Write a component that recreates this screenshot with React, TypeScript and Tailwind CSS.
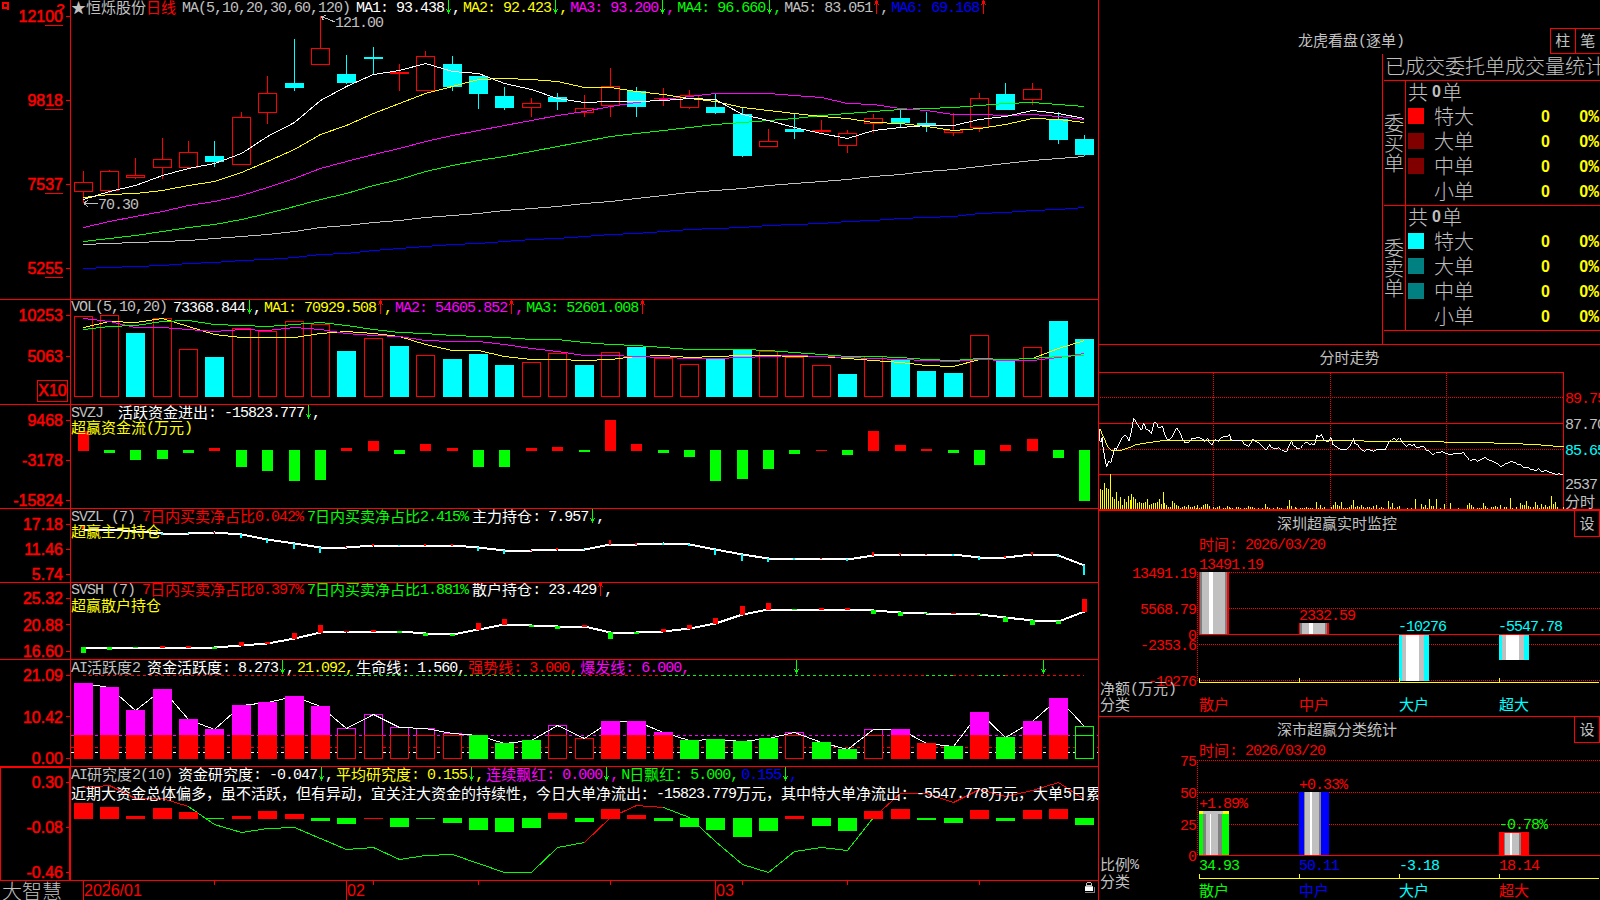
import React from 'react';

type Tone = 'r' | 'g' | 'c' | 'y' | 'w' | 's' | 'm' | 'b';

const text: Record<Tone, string> = {
  r: 'text-[#ff0000]',
  g: 'text-[#00ff00]',
  c: 'text-[#00ffff]',
  y: 'text-[#ffff00]',
  w: 'text-white',
  s: 'text-[#c0c0c0]',
  m: 'text-[#ff00ff]',
  b: 'text-[#0000ff]',
};

const RED = '#ff0000';
const GREEN = '#00ff00';
const CYAN = '#00ffff';
const YELLOW = '#ffff00';
const MAGENTA = '#ff00ff';
const SILVER = '#c0c0c0';
const BLUE = '#0000ff';

// 39 trading days, evenly spaced
const cx = (i: number) => Math.floor(83.2 + 26.358 * i);

// [rising, bodyTop, bodyBottom, high, low]
const candles: [number, number, number, number, number][] = [
  [1, 182, 191, 171, 203], [1, 171, 190, 170, 193], [1, 175, 177, 158, 179], [1, 159, 167, 138, 179],
  [1, 152, 167, 141, 167], [0, 156, 162, 141, 167], [1, 117, 164, 112, 164], [1, 93, 112, 76, 124],
  [0, 83, 88, 39, 91], [1, 48, 64, 16, 64], [0, 74, 83, 55, 84], [0, 57, 59, 47, 74],
  [1, 72, 73, 64, 91], [1, 56, 90, 51, 90], [0, 64, 87, 56, 91], [0, 76, 94, 76, 109],
  [0, 96, 108, 87, 110], [1, 103, 107, 98, 117], [0, 97, 102, 93, 110], [1, 108, 112, 95, 117],
  [1, 86, 105, 68, 117], [0, 91, 107, 87, 117], [1, 98, 98, 88, 106], [1, 95, 107, 90, 109],
  [0, 107, 113, 94, 114], [0, 114, 156, 107, 157], [1, 141, 146, 129, 146], [0, 129, 132, 113, 139],
  [1, 130, 131, 120, 134], [1, 133, 145, 130, 153], [1, 118, 123, 114, 133], [0, 118, 123, 109, 127],
  [0, 123, 125, 112, 132], [1, 130, 132, 113, 136], [1, 98, 127, 93, 132], [0, 94, 110, 83, 110],
  [1, 89, 99, 83, 105], [0, 119, 140, 112, 144], [0, 139, 155, 135, 156],
];

const ma: [string, number[]][] = [
  [BLUE, [268, 267, 266, 265, 263, 262, 260, 259, 257, 254, 253, 250, 248, 246, 244, 243, 241, 239, 238, 236, 234, 233, 231, 229, 228, 227, 225, 224, 223, 221, 220, 218, 217, 216, 213, 212, 210, 209, 207]],
  [SILVER, [244, 243, 242, 241, 240, 238, 236, 234, 231, 227, 225, 222, 220, 217, 215, 213, 210, 208, 206, 203, 201, 198, 195, 192, 190, 188, 185, 183, 181, 179, 176, 174, 171, 169, 166, 163, 160, 158, 156]],
  [GREEN, [241, 238, 235, 231, 227, 224, 219, 213, 206, 199, 193, 185, 179, 171, 165, 160, 156, 151, 146, 141, 136, 133, 130, 127, 124, 122, 120, 118, 115, 113, 111, 109, 108, 107, 105, 103, 102, 104, 106]],
  [MAGENTA, [227, 221, 216, 211, 205, 201, 195, 187, 178, 168, 161, 154, 148, 141, 135, 130, 125, 120, 115, 111, 106, 102, 99, 96, 93, 93, 93, 95, 97, 103, 104, 108, 110, 114, 114, 115, 114, 116, 119]],
  [YELLOW, [197, 194, 193, 190, 185, 181, 172, 161, 149, 134, 125, 113, 103, 93, 86, 79, 78, 79, 81, 87, 87, 91, 94, 98, 101, 107, 110, 113, 116, 118, 122, 123, 126, 130, 128, 124, 118, 119, 122]],
  ['#ffffff', [199, 191, 185, 175, 168, 163, 153, 136, 122, 100, 86, 74, 70, 63, 71, 73, 83, 89, 98, 102, 101, 101, 100, 98, 99, 114, 120, 127, 133, 138, 130, 127, 125, 125, 119, 116, 110, 113, 118]],
];

const volTop = [316, 315, 333, 318, 349, 357, 328, 331, 321, 324, 351, 338, 346, 355, 359, 354, 365, 362, 353, 365, 352, 347, 358, 364, 359, 349, 351, 357, 365, 374, 356, 359, 371, 373, 335, 360, 347, 321, 339];
// R = hollow red, C = solid cyan
const volKind = 'RRCRRCRRRRCRCRCCCRRCRCRRCCRRRCRCCCRCRCC';
const volMa: [string, number[]][] = [
  [YELLOW, [327, 321, 322, 318, 326, 334, 337, 337, 337, 333, 331, 333, 336, 344, 350, 350, 356, 359, 359, 360, 359, 356, 355, 357, 356, 355, 355, 356, 356, 358, 360, 362, 365, 366, 359, 359, 358, 348, 340]],
  [MAGENTA, [318, 321, 327, 327, 329, 331, 329, 330, 327, 329, 333, 335, 336, 340, 341, 341, 344, 348, 351, 355, 355, 356, 357, 358, 358, 357, 356, 355, 356, 357, 358, 359, 360, 361, 359, 360, 360, 357, 353]],
  [GREEN, [329, 326, 325, 321, 320, 324, 325, 326, 324, 322, 325, 329, 332, 333, 335, 336, 337, 339, 339, 342, 344, 345, 347, 349, 349, 349, 350, 352, 354, 356, 356, 357, 359, 360, 358, 359, 358, 356, 355]],
];

const flow = [20, -3, -10, -9, -3, 3, -17, -21, -31, -30, 3, 10, -4, 7, 3, -17, -17, 3, 4, -2, 31, 7, -3, -7, -31, -29, -19, -4, 1, -5, 20, 6, 2, -3, -15, 6, 12, -8, -51];

const mainHold = [529, 529, 531, 533, 533, 532, 534, 539, 543, 547, 547, 545, 545, 545, 545, 547, 550, 550, 549, 549, 544, 544, 543, 544, 549, 554, 558, 558, 558, 559, 555, 554, 554, 554, 557, 557, 554, 555, 565];
const mainTick = [5, -2, -2, -2, -1, 1, -4, -4, -6, -6, 1, 2, -1, 2, 2, -4, -4, 1, 2, -1, 5, 2, -2, -2, -6, -7, -4, -2, 1, -2, 4, 2, 1, -2, -3, 2, 3, -2, -10];

const retailHold = [647, 647, 647, 647, 647, 647, 645, 643, 638, 632, 631, 631, 631, 633, 634, 629, 624, 625, 626, 626, 632, 632, 631, 628, 623, 614, 609, 609, 609, 609, 610, 612, 613, 613, 614, 617, 620, 621, 611];
const retailTick = [-6, -3, -1, 2, 2, -2, 4, 2, 6, 8, 1, 2, -2, -3, -2, 7, 6, -2, -3, 2, -7, -2, 3, 4, 6, 9, 7, -1, 2, 2, -4, -4, -1, 1, -1, -5, -5, -3, 13];

const activeTop = [683, 687, 710, 689, 719, 729, 705, 702, 696, 706, 728, 714, 727, 728, 733, 735, 743, 740, 725, 738, 721, 721, 732, 740, 739, 741, 738, 732, 742, 749, 729, 729, 743, 746, 712, 737, 721, 698, 726];
// F = solid, H = hollow, G = solid green, E = hollow green
const activeKind = 'FFFFFFFFFFHHHHHGGGHHFFFGGGGHGGHFFGFGFFE';
const activeDash: [string, number, number][] = [
  [RED, 83, 320], [GREEN, 320, 583], [RED, 583, 663], [GREEN, 663, 873], [RED, 873, 926],
  [GREEN, 926, 953], [RED, 953, 979], [GREEN, 979, 1005], [RED, 1005, 1084],
];

const research = [16, 12, 3, 11, 7, -1, 3, 8, 5, -3, -6, 1, -9, -1, -5, -12, -14, -10, 6, -4, 10, 4, -3, -9, -12, -19, -13, 3, -8, -13, 8, 10, -2, -5, 9, -3, 9, 10, -7];
const researchLine = [787, 785, 798, 798, 806, 824, 832, 828, 827, 838, 849, 847, 859, 855, 854, 863, 872, 872, 847, 842, 817, 805, 807, 817, 841, 864, 872, 851, 847, 850, 817, 793, 793, 802, 789, 796, 790, 782, 799];
const researchParts: [string, number, number][] = [[RED, 0, 4], [GREEN, 4, 19], [RED, 19, 22], [GREEN, 22, 30], [RED, 30, 38]];

// one-minute price and average line, in thirds of a pixel
const price = '10,265 10,300 14,305 18,290 20,320 26,355 31,380 37,362 43,368 50,345 56,322 60,328 68,310 76,295 86,283 92,290 98,303 105,275 112,233 120,247 128,260 136,270 142,247 150,268 158,270 165,280 174,245 180,247 186,262 192,262 198,256 206,285 212,296 220,297 228,290 233,277 242,263 250,275 256,290 264,305 272,307 277,308 288,293 296,296 303,290 320,297 324,304 334,293 338,304 346,315 352,303 358,297 366,304 374,292 384,288 396,288 400,281 404,298 412,300 436,300 444,312 458,318 464,307 470,296 476,303 488,307 496,318 510,328 516,320 520,312 526,322 540,325 548,322 556,330 572,334 578,316 582,310 586,303 592,318 598,318 602,326 612,324 622,313 632,304 640,313 646,310 650,315 656,310 662,284 666,290 676,283 682,298 690,303 698,303 703,290 710,313 718,318 732,327 750,328 760,318 768,305 772,293 776,310 784,312 792,325 804,333 812,326 832,333 840,328 866,328 874,313 878,306 886,298 894,295 902,300 910,292 918,307 930,318 940,312 948,318 952,310 960,322 982,318 990,330 1000,333 1010,345 1018,337 1030,337 1036,333 1050,340 1064,343 1072,340 1094,340 1100,336 1108,345 1120,360 1138,358 1144,363 1152,358 1166,352 1176,358 1190,363 1206,371 1214,381 1224,372 1244,364 1256,366 1266,374 1274,374 1282,382 1296,382 1304,388 1320,390 1326,385 1336,394 1350,390 1360,396 1374,400 1382,404 1388,398 1392,403 1400,403';
const average = '10,265 22,290 34,318 44,330 74,330 104,320 120,313 150,308 200,301 400,301 800,301 806,304 1040,304 1050,307 1190,307 1200,310 1275,310 1285,313 1335,314 1345,317 1370,317 1402,320';

const minuteVol = '13:20 19:19 25:26 31:21 37:20 43:35 49:12 55:10 61:17 67:8 73:12 79:4 85:10 91:7 97:13 103:9 106:15 112:12 118:10 124:6 130:7 136:6 142:6 148:7 154:10 160:4 166:5 172:6 178:6 184:7 190:10 196:5 202:17 205:6 211:4 217:2 223:2 229:8 235:6 241:4 247:3 253:1 259:2 265:3 271:2 277:4 283:2 289:2 295:3 301:1 304:4 310:1 316:2 322:4 328:5 334:5 340:3 352:2 358:1 364:2 370:3 382:1 388:1 394:3 400:2 403:1 409:1 421:2 427:2 433:1 445:1 451:1 457:3 463:2 469:2 475:1 487:1 499:1 508:5 514:2 520:1 532:1 544:2 550:1 556:1 574:3 580:9 586:3 598:2 601:1 613:1 619:1 625:1 631:2 637:1 643:1 649:1 661:7 667:1 673:4 679:1 685:2 706:2 712:4 718:7 724:4 730:3 736:7 742:1 748:1 754:1 760:2 766:4 772:9 778:2 784:3 790:2 796:4 802:2 808:1 814:2 820:2 826:1 832:3 841:4 850:1 856:2 862:1 877:8 883:2 889:6 895:1 904:2 910:3 934:1 946:1 958:10 976:5 982:2 988:4 994:1 1000:10 1006:3 1012:3 1021:10 1033:1 1045:5 1063:6 1087:1 1114:4 1120:6 1126:4 1132:2 1144:1 1150:1 1156:1 1162:6 1168:3 1174:1 1186:2 1192:2 1198:3 1204:2 1213:4 1225:2 1231:2 1243:11 1249:1 1261:2 1273:6 1279:4 1285:4 1291:8 1297:3 1303:2 1312:2 1318:7 1324:4 1330:1 1336:5 1342:2 1348:4 1354:2 1360:3 1366:13 1372:5 1378:7 1384:2 1402:2'
  .split(' ')
  .map((p) => p.split(':').map(Number));

/* Mixed text: 8px latin cells, 15px hanzi cells, both with the baseline 13px down */
const T: React.FC<{ t: Tone; children: string }> = ({ t, children }) => (
  <span className={`flex h-4 w-max items-start whitespace-pre ${text[t]}`}>
    {children.split(/([\u2605\u3000-\u9fff\uff00-\uffef]+)/).map((s, i) =>
      s === '' ? null : i % 2 ? (
        <span key={i} className="font-['Noto_Sans_CJK_SC',sans-serif] text-[15px] leading-[13px]">{s}</span>
      ) : (
        <span key={i} className="font-['Liberation_Mono',monospace] text-[15px] leading-[18px] tracking-[-1px]">{s}</span>
      ),
    )}
  </span>
);

const Arrow: React.FC<{ up?: boolean }> = ({ up }) => (
  <svg className="h-[15px] w-2 shrink-0" viewBox="0 0 8 15" shapeRendering="crispEdges">
    {up ? (
      <path d="M4 0h1v14h-1zM3 1h3v2h-3zM2 4h1v1h-1zM6 4h1v1h-1zM3 3h3v1h-3z" fill={RED} />
    ) : (
      <path d="M4 0h1v14h-1zM3 10h3v2h-3zM2 9h1v1h-1zM6 9h1v1h-1z" fill={GREEN} />
    )}
  </svg>
);

const Item: React.FC<{ t: Tone; arrow?: 'up' | 'down'; end?: string; children: string }> = ({ t, arrow, end = ',', children }) => (
  <span className="flex">
    <T t={t}>{children}</T>
    {arrow && <Arrow up={arrow === 'up'} />}
    {end && <T t={t}>{end}</T>}
  </span>
);

const line = (ys: number[], from = 0, to = ys.length - 1) =>
  ys.slice(from, to + 1).map((y, i) => `${cx(i + from) + 0.5},${y + 0.5}`).join(' ');

const axis = "font-['Liberation_Sans',sans-serif] text-[16px] [-webkit-text-stroke:0.5px_#ff0000]";

interface PanelProps {
  box: string;
  view: string;
  labels: React.ReactNode[];
  gap: string;
  chart: React.ReactNode;
  children?: React.ReactNode;
  extra?: React.ReactNode;
  frame?: string;
}

const Panel: React.FC<PanelProps> = ({ box, view, labels, gap, chart, children, extra, frame = '' }) => (
  <div className={`flex shrink-0 border-b border-[#ff0000] ${box}`}>
    <div className={`flex w-[71px] shrink-0 flex-col border-r border-[#ff0000] ${gap} ${frame}`}>
      {labels.map((l, i) => (
        <div key={i} className={`flex h-4 shrink-0 items-center justify-end gap-[3px] leading-4 text-[#ff0000] ${axis}`}>
          <span className="pt-0.5">{l}</span>
          <span className="h-px w-1 bg-[#ff0000]" />
        </div>
      ))}
      {extra}
    </div>
    <div className="relative min-w-0 flex-1 overflow-hidden leading-4">
      <svg className="absolute inset-0 h-full w-full" viewBox={view} preserveAspectRatio="xMinYMin slice" shapeRendering="crispEdges">
        {chart}
      </svg>
      <div className="relative">{children}</div>
    </div>
  </div>
);

const priceLabel = (s: string) => (
  <>
    {s.slice(0, -2)}
    <span className="relative">
      {s.slice(-2)}
      <span className="absolute right-0 -bottom-[1px] h-px w-full bg-[#ff0000]" />
    </span>
  </>
);

const note = "font-['Liberation_Mono',monospace] text-[15px] tracking-[-1px]";

const LeftSide: React.FC = () => (
  <div className="flex w-[1099px] shrink-0 flex-col border-r border-[#ff0000]">
    <Panel
      box="h-[300px]"
      view="71 0 1027 299"
      gap="pt-[8px] gap-[68px]"
      labels={['12100', '9818', '7537', '5255'].map(priceLabel)}
      chart={
        <>
          {candles.map(([up, t, b, h, l], i) => {
            const x = cx(i);
            return up ? (
              <g key={i} fill={RED}>
                <rect x={x} y={h} width={1} height={t - h} />
                <rect x={x} y={b} width={1} height={l - b} />
                {b - t < 2 ? (
                  <rect x={x - 9} y={t} width={19} height={b - t + 1} />
                ) : (
                  <rect x={x - 8.5} y={t + 0.5} width={18} height={b - t} fill="none" stroke={RED} />
                )}
              </g>
            ) : (
              <g key={i} fill={CYAN}>
                <rect x={x} y={h} width={1} height={l - h} />
                <rect x={x - 9} y={t} width={19} height={b - t} />
              </g>
            );
          })}
          {ma.map(([c, ys]) => <polyline key={c} points={line(ys)} fill="none" stroke={c} />)}
          <path d="M321.5 16.5L335 22M321.5 16.5l5 -1M321.5 16.5l2 4M84 203.5h14M84 203.5l4 -3.5M84 203.5l4 3.5" stroke={SILVER} fill="none" />
          <text x={335} y={27} className={note} fill={SILVER}>121.00</text>
          <text x={98} y={209} className={note} fill={SILVER}>70.30</text>
        </>
      }
    >
      <div className="flex">
        <T t="s">★恒烁股份</T>
        <T t="r">日线</T>
        <span className="mr-1.5 ml-1.5"><T t="s">MA(5,10,20,30,60,120)</T></span>
        <div className="flex gap-[3px]">
          <Item t="w" arrow="down">MA1: 93.438</Item>
          <Item t="y" arrow="down">MA2: 92.423</Item>
          <Item t="m" arrow="down">MA3: 93.200</Item>
          <Item t="g" arrow="down">MA4: 96.660</Item>
          <Item t="s" arrow="up">MA5: 83.051</Item>
          <Item t="b" arrow="up" end="">MA6: 69.168</Item>
        </div>
      </div>
    </Panel>

    <Panel
      box="h-[105px]"
      view="71 300 1027 104"
      gap="pt-[7px] gap-[25px]"
      labels={['10253', '5063']}
      extra={
        <div className={`-mt-[9px] ml-[37px] flex h-[22px] w-[31px] shrink-0 items-center justify-center border border-[#ff0000] leading-4 text-[#ff0000] ${axis}`}>
          X10
        </div>
      }
      chart={
        <>
          {volTop.map((t, i) =>
            volKind[i] === 'R' ? (
              <rect key={i} x={cx(i) - 8.5} y={t + 0.5} width={18} height={396 - t} fill="none" stroke={RED} />
            ) : (
              <rect key={i} x={cx(i) - 9} y={t} width={19} height={397 - t} fill={CYAN} />
            ),
          )}
          {volMa.map(([c, ys]) => <polyline key={c} points={line(ys)} fill="none" stroke={c} />)}
        </>
      }
    >
      <div className="flex gap-[3px]">
        <span className="mr-[3px] -mt-px"><T t="s">VOL(5,10,20)</T></span>
        <Item t="w" arrow="down">73368.844</Item>
        <Item t="y" arrow="up">MA1: 70929.508</Item>
        <Item t="m" arrow="up">MA2: 54605.852</Item>
        <Item t="g" arrow="up" end="">MA3: 52601.008</Item>
      </div>
    </Panel>

    <Panel
      box="h-[104px]"
      view="71 405 1027 103"
      gap="pt-[7px] gap-[24px]"
      labels={['9468', '-3178', '-15824']}
      chart={flow.map((v, i) => (
        <rect key={i} x={cx(i) - 5} y={v > 0 ? 451 - v : 450} width={11} height={Math.abs(v)} fill={v > 0 ? RED : GREEN} />
      ))}
    >
      <div className="flex gap-[15px]">
        <T t="s">SVZJ</T>
        <Item t="w" arrow="down">活跃资金进出: -15823.777</Item>
      </div>
      <div className="-mt-px"><T t="y">超赢资金流(万元)</T></div>
    </Panel>

    <Panel
      box="h-[74px]"
      view="71 509 1027 73"
      gap="pt-[7px] gap-[9px]"
      labels={['17.18', '11.46', '5.74']}
      chart={
        <>
          <polyline points={line(mainHold)} fill="none" stroke="#fff" strokeWidth={2} />
          {mainTick.map((v, i) => (
            <rect key={i} x={cx(i) - 1} y={v > 0 ? mainHold[i] + 1 - v : mainHold[i]} width={2} height={Math.abs(v)} fill={v > 0 ? RED : CYAN} />
          ))}
        </>
      }
    >
      <div className="flex">
        <T t="s">SVZL (7)</T>
        <span className="ml-[7px]"><T t="r">7日内买卖净占比0.042%</T></span>
        <span className="mx-[4px]"><T t="g">7日内买卖净占比2.415%</T></span>
        <Item t="w" arrow="down">主力持仓: 7.957</Item>
      </div>
      <div className="-mt-px"><T t="y">超赢主力持仓</T></div>
    </Panel>

    <Panel
      box="h-[77px]"
      view="71 583 1027 76"
      gap="pt-[7px] gap-[10.5px]"
      labels={['25.32', '20.88', '16.60']}
      chart={
        <>
          <polyline points={line(retailHold)} fill="none" stroke="#fff" strokeWidth={2} />
          {retailTick.map((v, i) => (
            <rect key={i} x={cx(i) - 2} y={v > 0 ? retailHold[i] + 1 - v : retailHold[i]} width={5} height={Math.abs(v)} fill={v > 0 ? RED : GREEN} />
          ))}
        </>
      }
    >
      <div className="-mt-px flex">
        <T t="s">SVSH (7)</T>
        <span className="ml-[7px]"><T t="r">7日内买卖净占比0.397%</T></span>
        <span className="mx-[4px]"><T t="g">7日内买卖净占比1.881%</T></span>
        <Item t="w" arrow="up">散户持仓: 23.429</Item>
      </div>
      <div><T t="y">超赢散户持仓</T></div>
    </Panel>

    <Panel
      box="h-[107px]"
      view="71 660 1027 106"
      gap="pt-[7px] gap-[25.5px]"
      labels={['21.09', '10.42', '0.00']}
      chart={
        <>
          {activeDash.map(([c, a, b]) => <line key={a} x1={a} x2={b} y1={675.5} y2={675.5} stroke={c} strokeDasharray="3 3" />)}
          <line x1={71} x2={1098} y1={735.5} y2={735.5} stroke={MAGENTA} strokeDasharray="3 3" />
          <line x1={71} x2={1098} y1={747.5} y2={747.5} stroke={RED} strokeDasharray="3 3" />
          <line x1={71} x2={1098} y1={752.5} y2={752.5} stroke="#fff" strokeDasharray="3 3" />
          {activeTop.map((t, i) => {
            const x = cx(i) - 8.5;
            if (activeKind[i] === 'E') {
              return <path key={i} d={`M${x} 758.5V${t + 0.5}h18V758.5zM${x} 735.5h18`} stroke={GREEN} />;
            }
            if (activeKind[i] !== 'H') return null;
            const mid = Math.max(t, 735);
            return (
              <g key={i} fill="#000">
                {t < 735 && <rect x={x} y={t + 0.5} width={18} height={735 - t} stroke={MAGENTA} />}
                <rect x={x} y={mid + 0.5} width={18} height={758 - mid} stroke={RED} />
              </g>
            );
          })}
          <polyline points={line(activeTop)} fill="none" stroke="#fff" />
          {activeTop.map((t, i) => {
            const x = cx(i) - 9;
            if (activeKind[i] === 'G') return <rect key={i} x={x} y={t} width={19} height={759 - t} fill={GREEN} />;
            if (activeKind[i] !== 'F') return null;
            const mid = Math.max(t, 735);
            return (
              <g key={i}>
                <rect x={x} y={t} width={19} height={mid - t} fill={MAGENTA} />
                <rect x={x} y={mid} width={19} height={759 - mid} fill={RED} />
              </g>
            );
          })}
          {[796, 1043].map((x) => (
            <path key={x} d={`M${x} 660h1v14h-1zM${x - 1} 670h3v2h-3zM${x - 2} 669h1v1h-1zM${x + 2} 669h1v1h-1z`} fill={GREEN} />
          ))}
        </>
      }
    >
      <div className="flex gap-[3px]">
        <span className="mr-[4px]"><T t="s">AI活跃度2</T></span>
        <Item t="w" arrow="down">资金活跃度: 8.273</Item>
        <Item t="y">21.092</Item>
        <Item t="w">生命线: 1.560</Item>
        <Item t="r">强势线: 3.000</Item>
        <Item t="m">爆发线: 6.000</Item>
      </div>
    </Panel>

    <Panel
      box="h-[114px]"
      view="71 767 1027 113"
      gap="pt-[7px] gap-[29px]"
      frame="shadow-[inset_1px_1px_0_#ff0000,inset_-1px_0_0_#ff0000]"
      labels={['0.30', '-0.08', '-0.46']}
      chart={
        <>
          {researchParts.map(([c, a, b]) => <polyline key={a} points={line(researchLine, a, b)} fill="none" stroke={c} />)}
          {research.map((v, i) => (
            <rect key={i} x={cx(i) - 9} y={v > 0 ? 819 - v : 818} width={19} height={Math.abs(v)} fill={v > 0 ? RED : GREEN} />
          ))}
        </>
      }
    >
      <div className="flex gap-[3px]">
        <span className="mr-[3px]"><T t="s">AI研究度2(10)</T></span>
        <Item t="w" arrow="down">资金研究度: -0.047</Item>
        <Item t="y" arrow="down">平均研究度: 0.155</Item>
        <Item t="m" arrow="down">连续飘红: 0.000</Item>
        <Item t="g">N日飘红: 5.000</Item>
        <Item t="b" arrow="down">0.155</Item>
      </div>
      <div className="mt-[3px]">
        <T t="w">近期大资金总体偏多，虽不活跃，但有异动，宜关注大资金的持续性，今日大单净流出：-15823.779万元，其中特大单净流出：-5547.778万元，大单5日累</T>
      </div>
    </Panel>

    <div className="flex h-[19px] shrink-0 items-center">
      <div className="w-[70px] shrink-0 pl-[2px] font-['Noto_Sans_CJK_SC',sans-serif] text-[20px] leading-[17px] font-light whitespace-nowrap text-[#c0c0c0]">大智慧</div>
      <svg className="h-[19px] w-[1028px]" viewBox="70 881 1028 19" shapeRendering="crispEdges">
        {[83, 346, 715].map((x) => <rect key={x} x={x} y={881} width={1} height={19} fill={RED} />)}
        {[109, 214, 373, 478, 610, 742, 847, 979].map((x) => <rect key={x} x={x} y={881} width={1} height={4} fill={RED} />)}
        <g fill={RED} className={axis}>
          <text x={84} y={896}>2026/01</text>
          <text x={347} y={896}>02</text>
          <text x={716} y={896}>03</text>
        </g>
        <path d="M1086 885.5h6M1087 882.5h4M1086.5 883v2M1091.5 883v2" stroke={SILVER} />
        <rect x={1085} y={887} width={8} height={4} fill="#fff" />
        <rect x={1085} y={886} width={8} height={1} fill={SILVER} />
        <path d="M1085 892.5h10M1094.5 887v6" stroke="#808080" />
      </svg>
    </div>
  </div>
);

const hz20 = "font-['Noto_Sans_CJK_SC',sans-serif] text-[20px] font-light text-[#c0c0c0]";
const zero = "font-['Liberation_Sans',sans-serif] text-[16px] font-bold";

const OrderBlock: React.FC<{ side: string; swatches: string[] }> = ({ side, swatches }) => (
  <div className="flex h-[125px] border-t border-[#ff0000]">
    <div className={`flex w-[21px] shrink-0 flex-col justify-center leading-5 ${hz20}`}>
      {side.split('').map((c) => <span key={c}>{c}</span>)}
    </div>
    <div className="flex-1 border-l border-[#ff0000]">
      <div className={`flex h-[22px] items-center pl-0.5 ${hz20}`}>
        共<span className={`mr-px ml-[4px] ${zero}`}>0</span>单
      </div>
      {['特大', '大单', '中单', '小单'].map((name, i) => (
        <div key={name} className="flex h-[25px] items-center">
          <span className={`ml-0.5 size-4 shrink-0 ${swatches[i]}`} />
          <span className={`ml-[10px] w-[50px] shrink-0 leading-[25px] ${hz20}`}>{name}</span>
          <span className={`w-[66px] shrink-0 pt-0.5 text-right text-[#ffff00] ${zero}`}>0</span>
          <span className={`w-[49px] shrink-0 pt-0.5 text-right text-[#ffff00] ${zero}`}>
            0<span className="font-['Liberation_Mono',monospace] text-[18px] leading-4">%</span>
          </span>
        </div>
      ))}
    </div>
  </div>
);

const strips = (x: number, y: number, h: number, parts: [number, string][]) => {
  let at = x;
  return parts.map(([w, c], i) => {
    const r = <rect key={i} x={at} y={y} width={w} height={h} fill={c} />;
    at += w;
    return r;
  });
};

const GRAY = '#808080';

const Labels: React.FC<{ rows: [number, number, string, string, boolean?][] }> = ({ rows }) => (
  <>
    {rows.map(([x, y, s, c, end]) => (
      <text key={s + y} x={end ? x - 1 : x} y={y + 5} fill={c} textAnchor={end ? 'end' : 'start'} className={note}>{s}</text>
    ))}
  </>
);

const Title: React.FC<{ name: string; button?: boolean }> = ({ name, button }) => (
  <div className="relative flex h-[26px] items-center justify-center leading-4">
    <div className={button ? 'mr-[25px]' : ''}><T t="s">{name}</T></div>
    {button && (
      <div className="absolute top-0 right-0 flex h-[26px] w-[26px] items-center justify-center border border-t-0 border-[#ff0000]">
        <T t="s">设</T>
      </div>
    )}
  </div>
);

const Categories: React.FC<{ first: Tone; second: Tone; last: Tone; lift?: string }> = ({ first, second, last, lift = '' }) => (
  <div className="flex leading-4">
    <div className={`w-[99px] shrink-0 ${lift}`}><T t="s">分类</T></div>
    <div className="w-[100px] shrink-0"><T t={first}>散户</T></div>
    <div className="w-[100px] shrink-0"><T t={second}>中户</T></div>
    <div className="w-[100px] shrink-0"><T t="c">大户</T></div>
    <T t={last}>超大</T>
  </div>
);

const RightSide: React.FC = () => (
  <div className="flex w-[501px] shrink-0 flex-col">
    <div className="flex h-[345px] shrink-0 flex-col border-b border-[#ff0000]">
      <div className="flex h-[54px] shrink-0 items-start justify-end pt-[28px]">
        <div className="mr-[146px] pt-[5px] leading-4"><T t="s">龙虎看盘(逐单)</T></div>
        <div className="flex h-[26px] w-[50px] shrink-0 border-y border-l border-[#ff0000]">
          <div className="flex w-[25px] justify-center border-r border-[#ff0000] pt-1"><T t="s">柱</T></div>
          <div className="flex w-[25px] justify-center pt-1"><T t="s">笔</T></div>
        </div>
      </div>
      <div className="ml-[283px] flex-1 overflow-hidden border-l border-[#ff0000] pl-px">
        <div className={`h-[26px] pl-px leading-[23px] whitespace-nowrap ${hz20}`}>已成交委托单成交量统计</div>
        <OrderBlock side="委买单" swatches={['bg-[#ff0000]', 'bg-[#800000]', 'bg-[#800000]', '']} />
        <OrderBlock side="委卖单" swatches={['bg-[#00ffff]', 'bg-[#008080]', 'bg-[#008080]', '']} />
        <div className="border-t border-[#ff0000]" />
      </div>
    </div>

    <div className="h-[166px] shrink-0 border-b-2 border-[#ff0000]">
      <Title name="分时走势" />
      <svg className="h-[138px] w-full" viewBox="1099 371 501 138" shapeRendering="crispEdges">
        <g stroke={RED} fill="none">
          <path d="M1099 372.5H1563.5V509M1099 423.5H1563M1099 474.5H1563" />
          <path d="M1100 397.5H1563M1100 449.5H1563M1213.5 373V509M1330.5 373V509M1446.5 373V509" strokeDasharray="1 1" />
        </g>
        <g transform="translate(1096.3 340.3) scale(0.33333)" fill="none" strokeWidth={3}>
          <polyline points={average} stroke={YELLOW} />
          <polyline points={price} stroke="#fff" />
        </g>
        {minuteVol.map(([x, h]) => <rect key={x} x={1096 + Math.floor(x / 3)} y={509 - h} width={1} height={h} fill={YELLOW} />)}
        <Labels
          rows={[
            [1565, 398, '89.75', RED],
            [1565, 424, '87.70', SILVER],
            [1565, 450, '85.65', CYAN],
            [1565, 484, '2537', SILVER],
          ]}
        />
        <text x={1565} y={507} fill={SILVER} className="font-['Noto_Sans_CJK_SC',sans-serif] text-[15px]">分时</text>
      </svg>
    </div>

    <div className="h-[206px] shrink-0 border-b border-[#ff0000]">
      <Title name="深圳超赢实时监控" button />
      <div className="pl-[100px] leading-4"><T t="r">时间: 2026/03/20</T></div>
      <svg className="block h-[128px] w-full" viewBox="1099 553 501 128" shapeRendering="crispEdges" overflow="visible">
        <path d="M1197.5 572V681M1199 572.5H1600M1199 608.5H1600M1199 644.5H1600M1199 680.5H1600" stroke={RED} strokeDasharray="1 1" />
        <path d="M1199 634.5H1600" stroke={RED} />
        {strips(1199, 572, 62, [[1, RED], [2, GRAY], [7, SILVER], [4, '#fff'], [12, SILVER], [2, GRAY], [2, RED]])}
        {strips(1299, 623, 11, [[1, RED], [2, GRAY], [7, SILVER], [4, '#fff'], [12, SILVER], [2, GRAY], [2, RED]])}
        {strips(1399, 635, 46, [[3, CYAN], [4, SILVER], [13, '#fff'], [5, SILVER], [5, CYAN]])}
        {strips(1499, 635, 25, [[3, CYAN], [4, SILVER], [13, '#fff'], [5, SILVER], [5, CYAN]])}
        <path d="M1199 682.5H1599M1199.5 678V682M1299.5 678V682M1399.5 678V682M1499.5 678V682" stroke={YELLOW} />
        <Labels
          rows={[
            [1197, 573, '13491.19', RED, true],
            [1197, 609, '5568.79', RED, true],
            [1197, 635, '0', RED, true],
            [1197, 645, '-2353.6', RED, true],
            [1197, 681, '-10276', RED, true],
            [1199, 564, '13491.19', RED],
            [1299, 615, '2332.59', RED],
            [1398, 626, '-10276', CYAN],
            [1498, 626, '-5547.78', CYAN],
          ]}
        />
      </svg>
      <div className="pl-px leading-4"><T t="s">净额(万元)</T></div>
      <div className="pl-px"><Categories first="r" second="r" last="c" /></div>
    </div>

    <div className="h-[183px] shrink-0">
      <Title name="深市超赢分类统计" button />
      <div className="pl-[100px] leading-4"><T t="r">时间: 2026/03/20</T></div>
      <svg className="block h-[98px] w-full" viewBox="1099 759 501 98" shapeRendering="crispEdges" overflow="visible">
        <path d="M1197.5 760V856M1199 760.5H1600M1199 792.5H1600M1199 824.5H1600" stroke={RED} strokeDasharray="1 1" />
        {strips(1199, 811, 3, [[4, YELLOW], [20, SILVER], [6, YELLOW]])}
        {strips(1199, 814, 41, [[4, '#00ff00'], [3, GRAY], [4, SILVER], [1, '#fff'], [7, SILVER], [4, GRAY], [7, '#00ff00']])}
        {strips(1299, 792, 63, [[5, BLUE], [1, GRAY], [5, SILVER], [2, '#fff'], [7, SILVER], [2, GRAY], [8, BLUE]])}
        {strips(1499, 832, 23, [[5, RED], [1, GRAY], [5, SILVER], [2, '#fff'], [7, SILVER], [2, GRAY], [8, RED]])}
        <rect x={1499} y={832} width={30} height={1} fill={RED} />
        <path d="M1199 855.5H1600" stroke={RED} />
        <path d="M1199 878.5H1599M1199.5 874V878M1299.5 874V878M1399.5 874V878M1499.5 874V878" stroke={YELLOW} />
        <Labels
          rows={[
            [1197, 761, '75', RED, true],
            [1197, 793, '50', RED, true],
            [1197, 825, '25', RED, true],
            [1197, 856, '0', RED, true],
            [1199, 803, '+1.89%', RED],
            [1299, 784, '+0.33%', RED],
            [1499, 824, '-0.78%', GREEN],
            [1199, 865, '34.93', GREEN],
            [1299, 865, '50.11', BLUE],
            [1399, 865, '-3.18', CYAN],
            [1499, 865, '18.14', RED],
          ]}
        />
      </svg>
      <div className="pl-px leading-4"><T t="s">比例%</T></div>
      <div className="pt-[10px] pl-px"><Categories first="g" second="b" last="r" lift="-mt-[9px]" /></div>
    </div>
  </div>
);

export default function App() {
  return (
    <div className="relative flex h-[900px] w-[1600px] overflow-hidden bg-black">
      <LeftSide />
      <RightSide />
      <svg className="absolute top-[2px] left-[2px] h-[8px] w-[8px]" viewBox="0 0 8 8" shapeRendering="crispEdges">
        <path d="M0 0h7v7h-7zM2 2v3h3v-3z" fillRule="evenodd" fill={RED} />
        <path d="M5 7h2v1h-2z" fill={RED} />
      </svg>
      <div className="absolute top-px left-[56px] font-['Liberation_Sans',sans-serif] text-[15px] leading-4 font-bold text-[#ff0000]">?</div>
    </div>
  );
}
